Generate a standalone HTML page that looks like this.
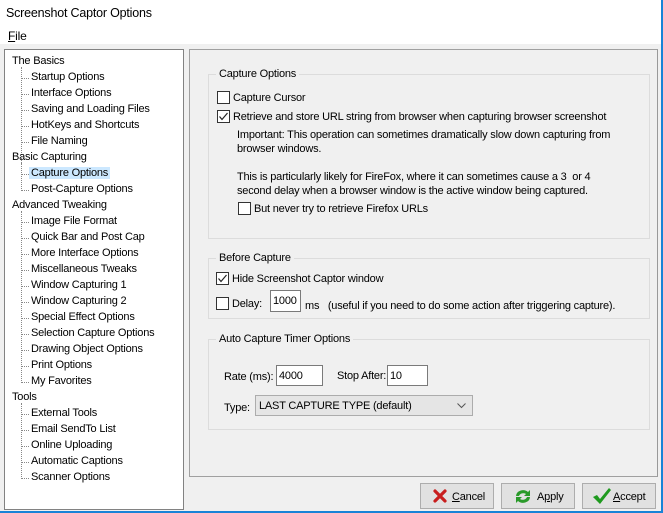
<!DOCTYPE html>
<html><head><style>
*{margin:0;padding:0;box-sizing:border-box}
body{width:663px;height:513px;background:#f0f0f0;font-family:"Liberation Sans",sans-serif;font-size:11px;letter-spacing:-0.2px;color:#000;position:relative;overflow:hidden}
.a{position:absolute;white-space:nowrap}
.cb{position:absolute;width:13px;height:13px;border:1px solid #333;background:#fff}
.gb{position:absolute;border:1px solid #dcdcdc}
.gt{position:absolute;background:#f0f0f0;padding:0 3px;top:-7px;left:6px}
.tb{position:absolute;background:#fff;border:1px solid #7a7a7a;padding:4px 2px}
.btn{position:absolute;top:483px;height:26px;border:1px solid #adadad;background:#e1e1e1}
.dl{position:absolute;border-top:1px dotted #888;width:8px;left:21px}
</style></head><body>
<div class="a" style="left:0;top:0;width:663px;height:44px;background:#fff"></div>
<div class="a" style="left:6px;top:6px;font-size:12.5px">Screenshot Captor Options</div>
<div class="a" style="left:8px;top:29px;font-size:12px"><u>F</u>ile</div>
<div class="a" style="left:4px;top:49px;width:180px;height:461px;background:#fff;border:1px solid #828282"></div>
<div class="a" style="left:21px;top:67px;height:124px;border-left:1px dotted #888"></div>
<div class="a" style="left:21px;top:163px;height:28px;border-left:1px dotted #888"></div>
<div class="a" style="left:21px;top:211px;height:172px;border-left:1px dotted #888"></div>
<div class="a" style="left:21px;top:403px;height:76px;border-left:1px dotted #888"></div>
<div id="tree"></div>
<div class="a" style="left:189px;top:49px;width:469px;height:428px;border:1px solid #a0a0a0;border-right-color:#999"></div>
<div class="gb" style="left:208px;top:74px;width:442px;height:165px"><div class="gt" style="left:7px">Capture Options</div></div>
<div class="cb" style="left:217px;top:91px"></div><div class="a" style="left:233px;top:92px">Capture Cursor</div>
<div class="cb" style="left:217px;top:110px"><svg width="11" height="11" viewBox="0 0 11 11" style="position:absolute;left:0;top:0"><path d="M1.5 5.5 L4 8.5 L9.5 2" fill="none" stroke="#222" stroke-width="1.2"/></svg></div>
<div class="a" style="left:233px;top:111px">Retrieve and store URL string from browser when capturing browser screenshot</div>
<div class="a" style="left:237px;top:128px;line-height:14px">Important: This operation can sometimes dramatically slow down capturing from<br>browser windows.<br><br>This is particularly likely for FireFox, where it can sometimes cause a 3&nbsp; or 4<br>second delay when a browser window is the active window being captured.</div>
<div class="cb" style="left:238px;top:202px"></div><div class="a" style="left:254px;top:203px">But never try to retrieve Firefox URLs</div>
<div class="gb" style="left:208px;top:258px;width:442px;height:61px"><div class="gt" style="left:7px">Before Capture</div></div>
<div class="cb" style="left:216px;top:272px"><svg width="11" height="11" viewBox="0 0 11 11" style="position:absolute;left:0;top:0"><path d="M1.5 5.5 L4 8.5 L9.5 2" fill="none" stroke="#222" stroke-width="1.2"/></svg></div>
<div class="a" style="left:232px;top:273px">Hide Screenshot Captor window</div>
<div class="cb" style="left:216px;top:297px"></div><div class="a" style="left:232px;top:298px">Delay:</div>
<div class="tb" style="left:270px;top:290px;width:31px;height:22px">1000</div>
<div class="a" style="left:305px;top:300px">ms &nbsp;&nbsp;(useful if you need to do some action after triggering capture).</div>
<div class="gb" style="left:208px;top:339px;width:442px;height:91px"><div class="gt" style="left:7px">Auto Capture Timer Options</div></div>
<div class="a" style="left:224px;top:371px">Rate (ms):</div>
<div class="tb" style="left:276px;top:365px;width:47px;height:21px">4000</div>
<div class="a" style="left:337px;top:370px">Stop After:</div>
<div class="tb" style="left:387px;top:365px;width:41px;height:21px">10</div>
<div class="a" style="left:224px;top:402px">Type:</div>
<div class="a" style="left:255px;top:395px;width:218px;height:21px;background:#e5e5e5;border:1px solid #acacac;padding:4px 3px">LAST CAPTURE TYPE (default)<svg width="9" height="6" style="position:absolute;right:6px;top:7px"><path d="M0.5 0.5 L4.5 4.5 L8.5 0.5" fill="none" stroke="#555"/></svg></div>
<div class="btn" style="left:420px;width:74px"><svg class="a" style="left:12px;top:5px" width="14" height="14" viewBox="0 0 14 14"><path d="M2 2 L12 12 M12 2 L2 12" stroke="#c81e1e" stroke-width="3.2" stroke-linecap="round"/></svg><span class="a" style="left:31px;top:7px"><u>C</u>ancel</span></div>
<div class="btn" style="left:501px;width:74px"><svg class="a" style="left:12px;top:4px" width="18" height="17" viewBox="0 0 18 17"><path d="M2 8 A7 6 0 0 1 14 4 L16 2 L16 8 L10 8 L12 6 A4.5 4 0 0 0 5 8 Z" fill="#2a9a2a"/><path d="M16 9 A7 6 0 0 1 4 13 L2 15 L2 9 L8 9 L6 11 A4.5 4 0 0 0 13 9 Z" fill="#2a9a2a"/></svg><span class="a" style="left:35px;top:7px">A<u>p</u>ply</span></div>
<div class="btn" style="left:582px;width:74px"><svg class="a" style="left:9px;top:3px" width="20" height="18" viewBox="0 0 20 18"><path d="M1 10 L5 8 L8 12 L17 1 L19 3 L8 17 Z" fill="#1f9a1f"/></svg><span class="a" style="left:30px;top:7px"><u>A</u>ccept</span></div>
<div class="a" style="left:0;top:511px;width:663px;height:2px;background:#1883d7"></div>
<div class="a" style="left:661px;top:0;width:2px;height:513px;background:#1883d7"></div>
<script>
var items=[[0,"The Basics"],[1,"Startup Options"],[1,"Interface Options"],[1,"Saving and Loading Files"],[1,"HotKeys and Shortcuts"],[1,"File Naming"],[0,"Basic Capturing"],[1,"Capture Options"],[1,"Post-Capture Options"],[0,"Advanced Tweaking"],[1,"Image File Format"],[1,"Quick Bar and Post Cap"],[1,"More Interface Options"],[1,"Miscellaneous Tweaks"],[1,"Window Capturing 1"],[1,"Window Capturing 2"],[1,"Special Effect Options"],[1,"Selection Capture Options"],[1,"Drawing Object Options"],[1,"Print Options"],[1,"My Favorites"],[0,"Tools"],[1,"External Tools"],[1,"Email SendTo List"],[1,"Online Uploading"],[1,"Automatic Captions"],[1,"Scanner Options"]];
var h="";items.forEach(function(it,i){var y=55+i*16;
if(it[0]){h+='<div class="dl" style="top:'+(y+7)+'px"></div>';
h+='<div class="a" style="left:'+(i==7?29:31)+'px;top:'+y+'px;'+(i==7?'background:#cce8ff;padding:0 2px;':'')+'">'+it[1]+'</div>';}
else h+='<div class="a" style="left:12px;top:'+y+'px">'+it[1]+'</div>';});
document.getElementById("tree").innerHTML=h;
</script>
</body></html>
